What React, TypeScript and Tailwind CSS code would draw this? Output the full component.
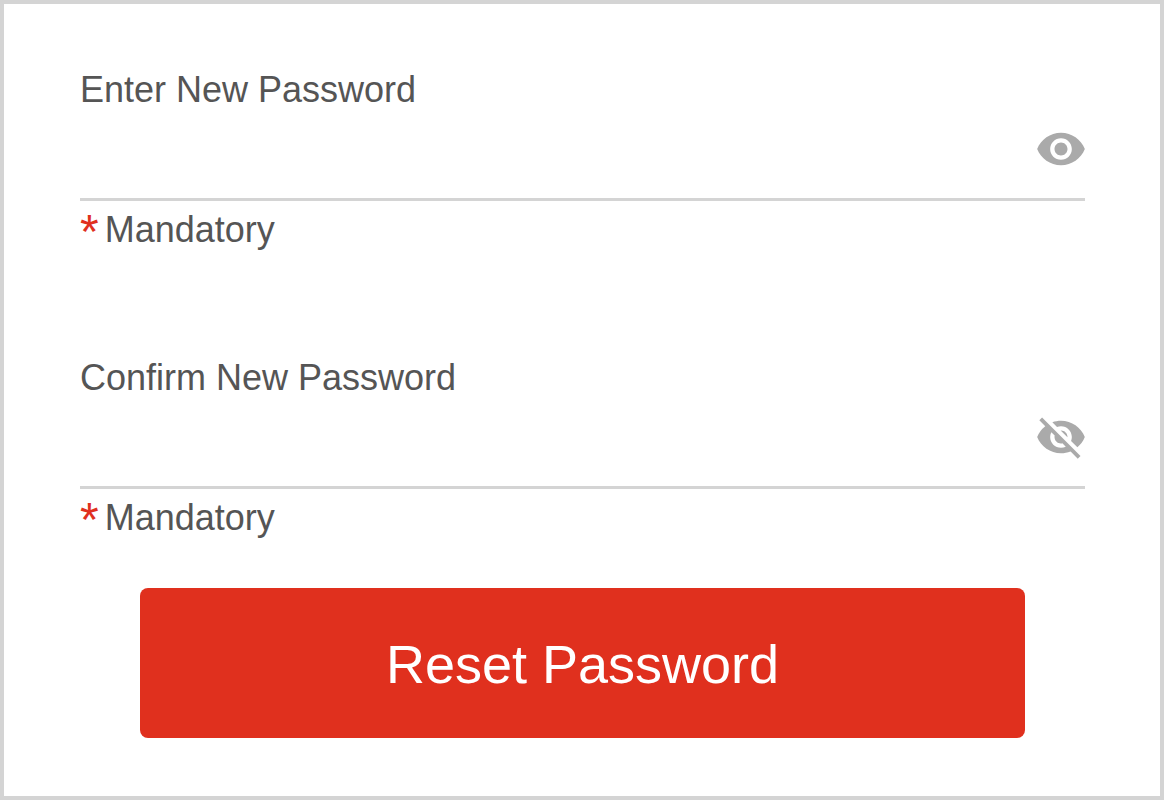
import { useState } from "react";
import { MdVisibility, MdVisibilityOff } from "react-icons/md";

function PasswordField({ id, label, initiallyVisible }: { id: string; label: string; initiallyVisible: boolean }) {
  const [visible, setVisible] = useState(initiallyVisible);
  const Icon = visible ? MdVisibility : MdVisibilityOff;
  return (
    <div>
      <label htmlFor={id} className="block text-4xl leading-10">
        {label}
      </label>
      <div className="flex h-[91px] items-start border-b-3 border-[#d4d4d4]">
        <input
          id={id}
          type={visible ? "text" : "password"}
          aria-describedby={`${id}-hint`}
          required
          className="h-20 min-w-0 flex-1 bg-transparent text-4xl outline-none"
        />
        <button
          type="button"
          aria-label={visible ? "Hide password" : "Show password"}
          onClick={() => setVisible(!visible)}
          className="-mr-0.5 mt-[13px] text-[#aaaaaa]"
        >
          <Icon className="size-[52px]" />
        </button>
      </div>
      <p id={`${id}-hint`} className="mt-[7px] flex items-start gap-1.5 text-4xl leading-11">
        <span className="h-11 text-5xl leading-12 text-[#e0301e]">*</span>
        Mandatory
      </p>
    </div>
  );
}

export default function App() {
  return (
    <main className="min-h-screen border-4 border-[#d4d4d4] bg-white pr-[75px] pl-[76px] pt-[66px] pb-14 font-['Liberation_Sans',Arial,sans-serif] text-[#555555]">
      <form onSubmit={(e) => e.preventDefault()}>
        <div className="flex flex-col gap-[106px]">
          <PasswordField id="new-password" label="Enter New Password" initiallyVisible />
          <PasswordField id="confirm-password" label="Confirm New Password" initiallyVisible={false} />
        </div>
        <div className="mt-12 px-[60px]">
          <button type="submit" className="h-[150px] w-full rounded-lg bg-[#e0301e] pt-0.5 text-[54px] text-white">
            Reset Password
          </button>
        </div>
      </form>
    </main>
  );
}
